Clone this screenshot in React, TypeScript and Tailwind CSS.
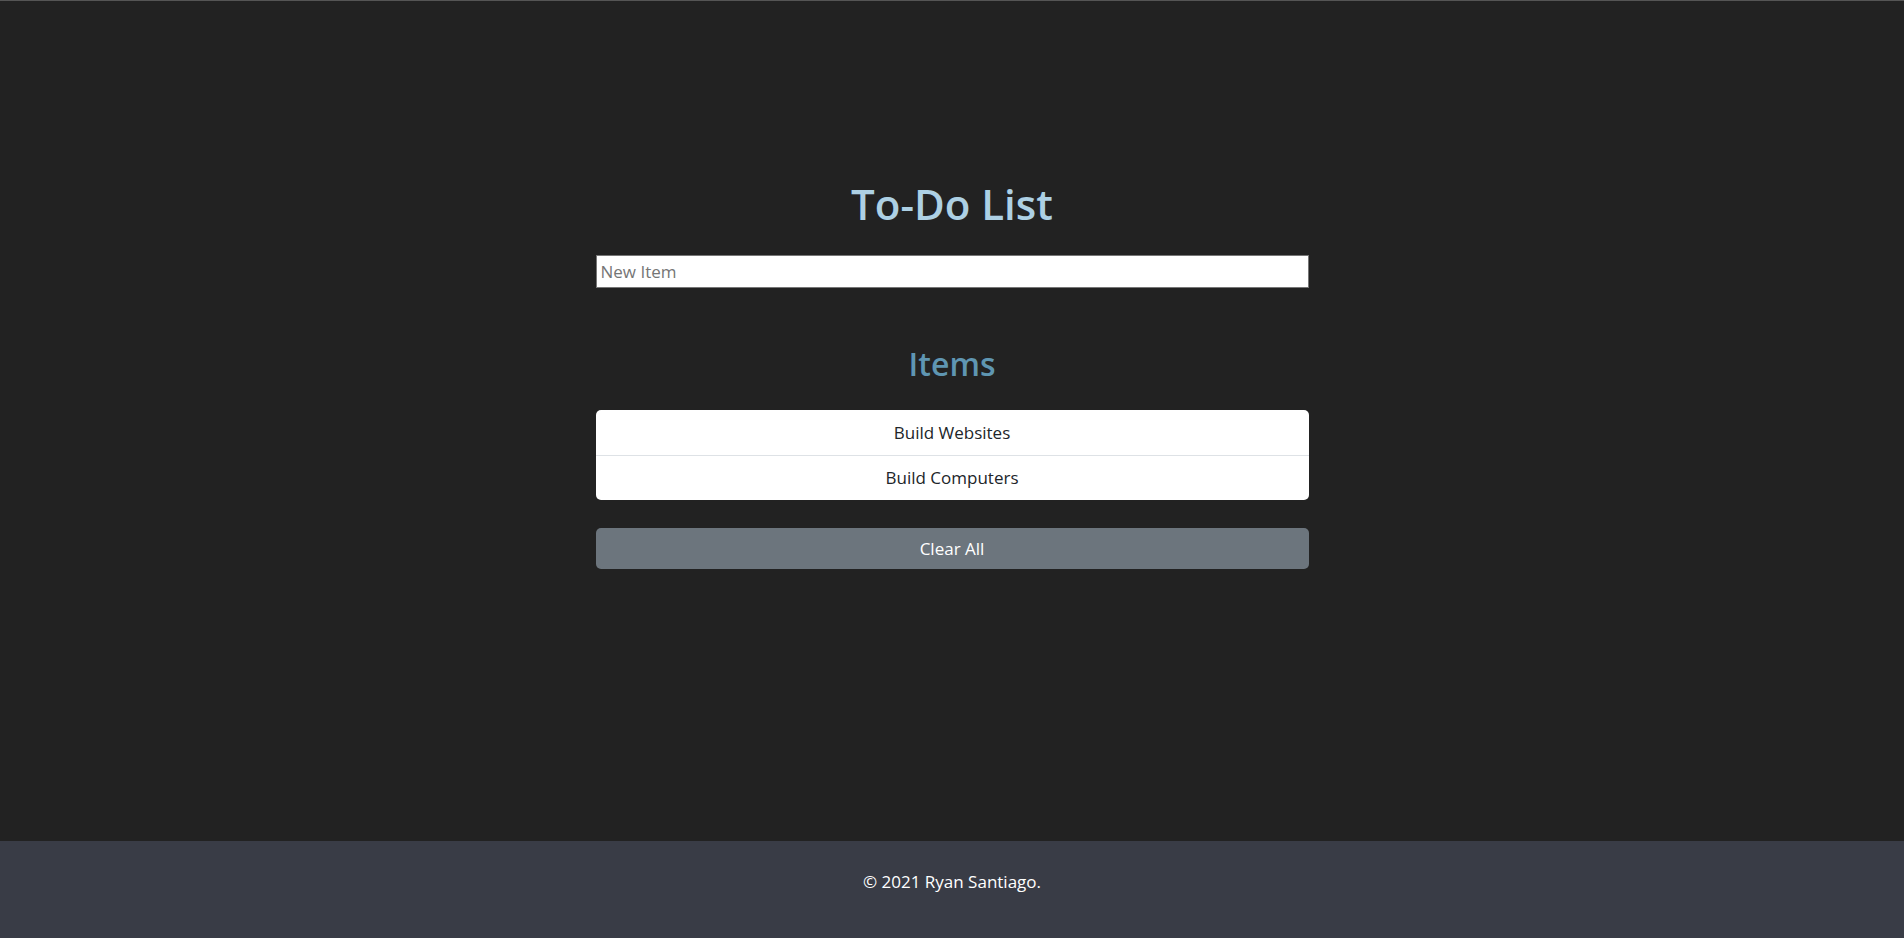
import { useState } from 'react';

const FONT = '[font-family:"Open_Sans","Noto_Sans",sans-serif]';

function App() {
  const [items, setItems] = useState<string[]>(['Build Websites', 'Build Computers']);
  const [text, setText] = useState('');

  const addItem = (e: React.FormEvent) => {
    e.preventDefault();
    if (!text.trim()) return;
    setItems(prev => [...prev, text.trim()]);
    setText('');
  };

  return (
    <div className={`min-h-screen flex flex-col bg-[#222222] border-t border-[#555555] ${FONT}`}>
      <main className="flex-1 flex flex-col items-center pt-[176px]">
        <div className="w-[713px] flex flex-col">
          <h1 className="text-center text-[42px] leading-[53px] font-semibold text-[#add0e4]">To-Do List</h1>
          <form onSubmit={addItem} className="mt-[25px]">
            <input
              type="text"
              value={text}
              onChange={e => setText(e.target.value)}
              placeholder="New Item"
              className="w-full h-[33px] bg-white border border-[#767676] px-[4px] text-[17px] text-black placeholder:text-[#757575] outline-none"
            />
          </form>
          <h2 className="mt-[57px] text-center text-[32px] leading-[38px] font-semibold text-[#5f96b2]">Items</h2>
          <ul className="mt-[27px] bg-white rounded-[5px] overflow-hidden">
            {items.map((item, i) => (
              <li
                key={i}
                className={`h-[45px] flex items-center justify-center text-[17px] text-[#212529] ${i > 0 ? 'border-t border-[#dee2e6]' : ''}`}
              >
                {item}
              </li>
            ))}
          </ul>
          <button
            onClick={() => setItems([])}
            className="mt-[28px] h-[41px] w-full rounded-[5px] bg-[#6c757d] text-white text-[17px]"
          >
            Clear All
          </button>
        </div>
      </main>
      <footer className="h-[97px] bg-[#393c46] flex items-center justify-center">
        <p className="text-white text-[17px] -mt-[16px]">© 2021 Ryan Santiago.</p>
      </footer>
    </div>
  );
}

export default App;
